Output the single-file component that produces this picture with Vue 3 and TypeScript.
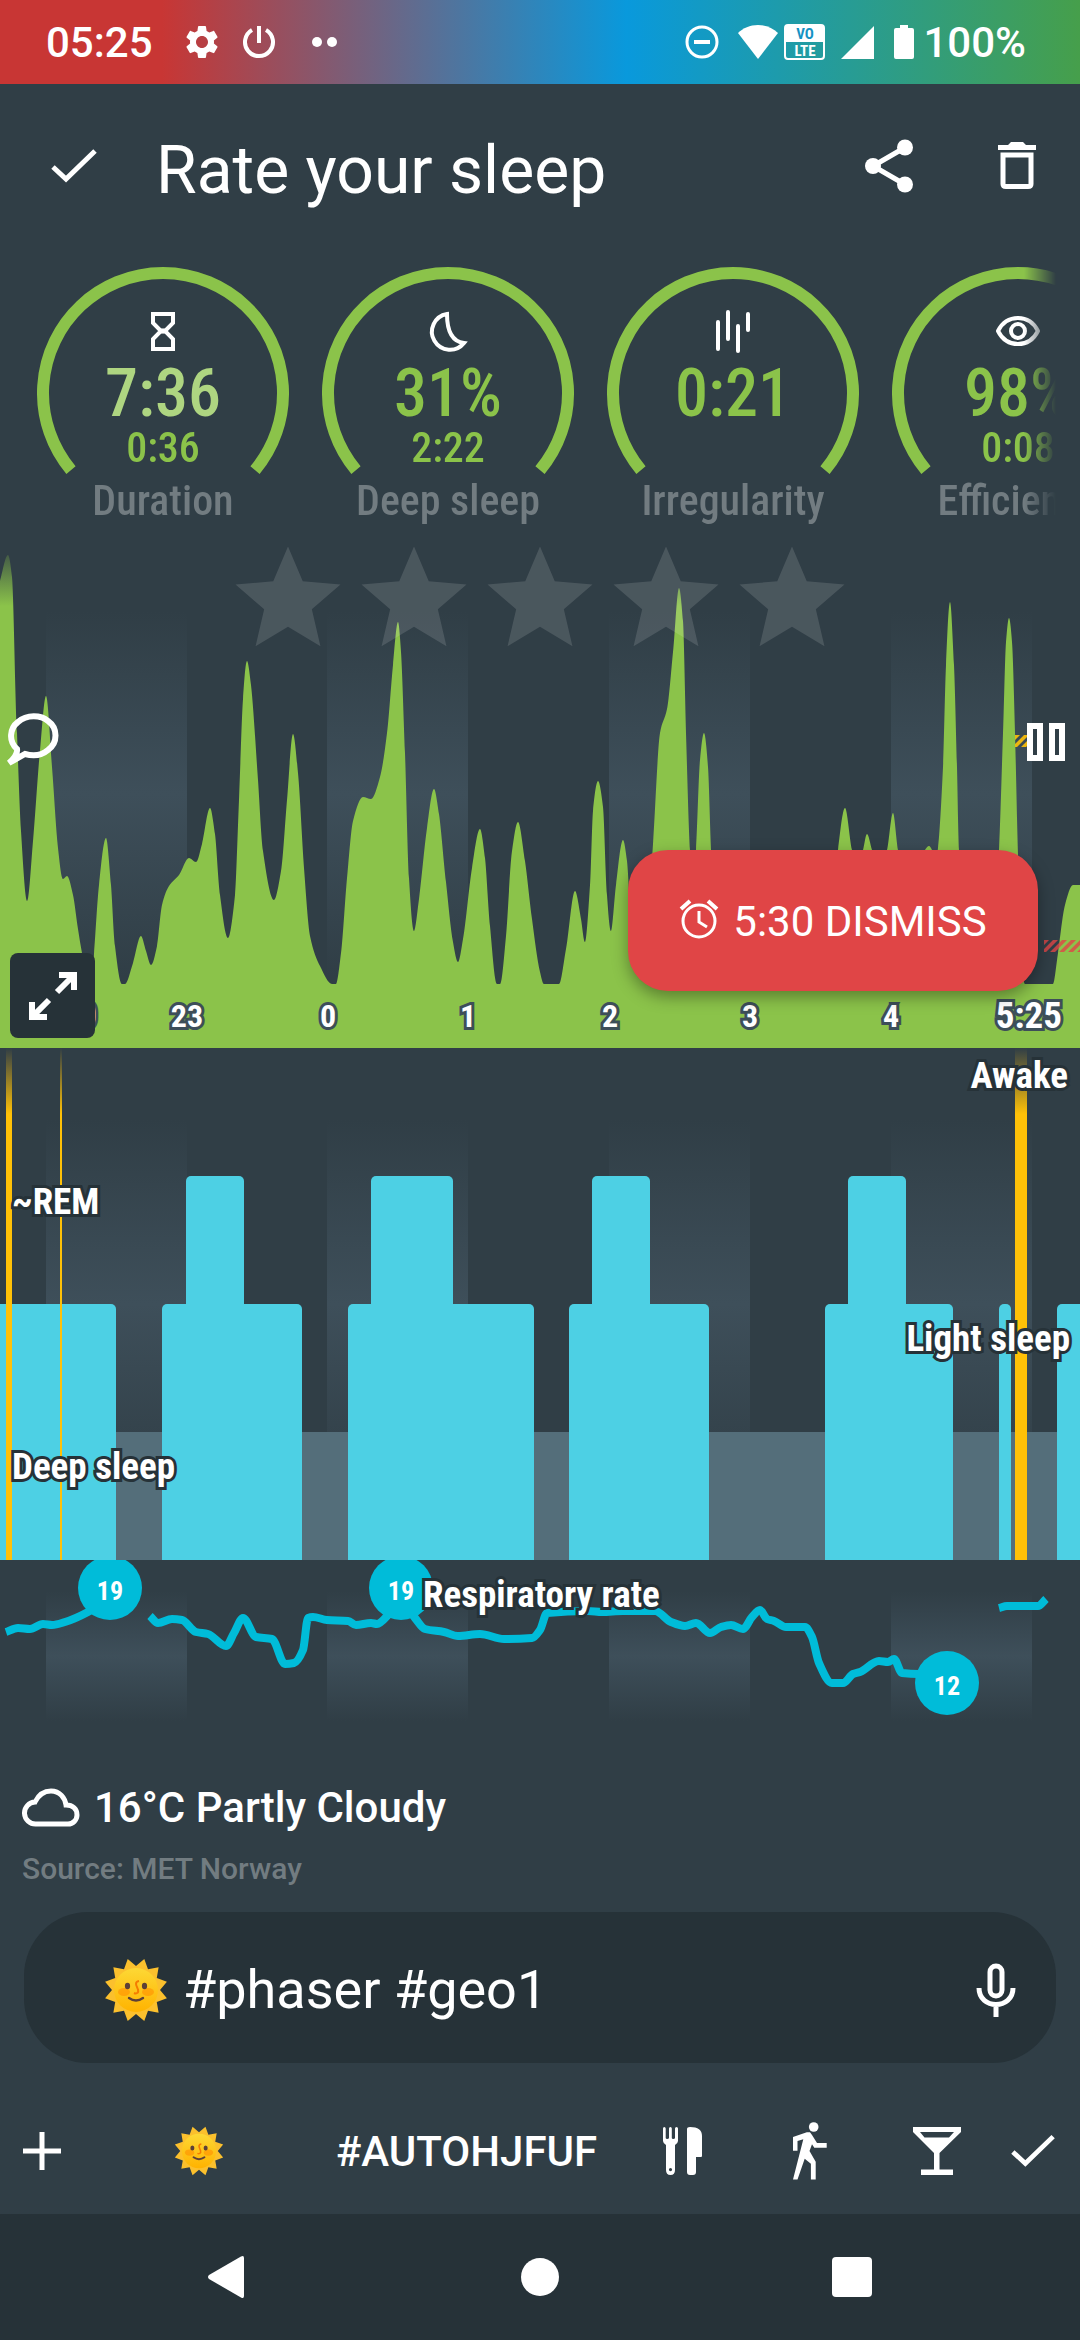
<script setup lang="ts">
import { ref } from 'vue'

type Point = [number, number]

interface Gauge {
  icon: 'hourglass' | 'moon' | 'bars' | 'eye'
  value: string
  detail: string
  label: string
  soft?: boolean
}

const gauges: Gauge[] = [
  { icon: 'hourglass', value: '7:36', detail: '0:36', label: 'Duration', soft: true },
  { icon: 'moon', value: '31%', detail: '2:22', label: 'Deep sleep' },
  { icon: 'bars', value: '0:21', detail: '', label: 'Irregularity' },
  { icon: 'eye', value: '98%', detail: '0:08', label: 'Efficiency' },
]

const rating = ref(0)
const comment = ref('#phaser #geo1')

const hourBands = [46, 327, 609, 891]

const hours = [
  { text: '23', x: 187 },
  { text: '0', x: 328 },
  { text: '1', x: 468 },
  { text: '2', x: 610 },
  { text: '3', x: 750 },
  { text: '4', x: 891 },
]

const activity: Point[] = [
  [0, 41], [8, 15], [12, 37], [17, 193], [21, 291], [27, 361], [33, 301], [40, 210], [46, 156],
  [52, 227], [58, 308], [63, 339], [67, 336], [73, 355], [78, 389], [82, 413], [88, 444], [91, 444],
  [94, 414], [99, 345], [106, 298], [111, 345], [115, 406], [122, 444], [125, 444], [133, 423],
  [141, 396], [146, 411], [151, 425], [157, 406], [162, 365], [169, 346], [179, 335], [189, 318],
  [196, 322], [202, 304], [210, 268], [215, 294], [220, 355], [228, 398], [235, 355], [239, 260],
  [243, 159], [247, 121], [251, 145], [258, 240], [263, 311], [274, 360], [281, 331], [287, 260],
  [293, 194], [298, 233], [304, 328], [310, 396], [320, 426], [332, 444], [336, 444], [341, 413],
  [347, 338], [353, 281], [363, 257], [371, 259], [380, 237], [387, 193], [393, 125], [398, 82],
  [401, 112], [405, 213], [409, 338], [414, 391], [419, 359], [427, 288], [434, 249], [439, 274],
  [446, 342], [453, 402], [458, 422], [463, 399], [472, 328], [480, 289], [485, 318], [490, 386],
  [497, 444], [500, 444], [506, 396], [512, 311], [518, 282], [525, 321], [532, 379], [540, 432],
  [544, 444], [559, 444], [566, 409], [575, 351], [581, 379], [585, 402], [590, 345], [593, 271],
  [598, 241], [603, 267], [607, 355], [611, 391], [616, 345], [623, 300], [627, 321], [632, 400],
  [638, 430], [646, 400], [653, 304], [660, 193], [667, 169], [673, 112], [679, 48], [683, 81],
  [686, 193], [690, 310], [693, 345], [696, 310], [700, 220], [704, 193], [708, 227], [711, 310],
  [716, 395], [724, 444], [820, 444], [833, 362], [838, 310], [845, 268], [852, 310], [857, 328],
  [863, 310], [867, 294], [872, 310], [879, 335], [887, 310], [893, 273], [898, 310], [911, 370],
  [925, 310], [929, 306], [932, 310], [935, 322], [938, 308], [943, 227], [946, 125], [950, 62],
  [954, 125], [957, 227], [959, 310], [967, 444], [991, 444], [999, 310], [1003, 193], [1006, 102],
  [1009, 78], [1012, 102], [1015, 193], [1018, 315], [1021, 410], [1025, 444], [1053, 444],
  [1058, 413], [1065, 365], [1073, 345], [1080, 345],
]

const breathing: Point[][] = [
  [[6, 72], [18, 68], [30, 69], [43, 64], [52, 65], [65, 62], [88, 52], [110, 37]],
  [
    [150, 56], [158, 63], [172, 59], [182, 60], [196, 72], [208, 74], [226, 86], [234, 73],
    [243, 58], [256, 77], [272, 79], [285, 104], [294, 103], [303, 90], [308, 58], [313, 57],
    [327, 60], [348, 61], [356, 65], [371, 63], [377, 64], [389, 54], [400, 40], [415, 58],
    [425, 69], [444, 72], [458, 76], [480, 74], [504, 79], [532, 78], [540, 70], [547, 53],
    [588, 51], [602, 52], [623, 51], [655, 51], [671, 62], [685, 66], [696, 63], [710, 73],
    [721, 67], [731, 65], [743, 69], [752, 57], [760, 50], [767, 59], [774, 61], [786, 67],
    [805, 67], [812, 77], [819, 103], [832, 123], [843, 123], [853, 114], [860, 112], [879, 101],
    [888, 102], [894, 99], [902, 113], [919, 114], [947, 114],
  ],
  [[999, 48], [1007, 46], [1038, 46], [1046, 39]],
]

const breathingMarks = [
  { x: 110, y: 28, text: '19' },
  { x: 401, y: 28, text: '19' },
  { x: 947, y: 123, text: '12' },
]

// x, width and top of every sleep phase block
const phases = [
  { x: -6, w: 122, y: 256 },
  { x: 162, w: 140, y: 256 },
  { x: 186, w: 58, y: 128 },
  { x: 348, w: 186, y: 256 },
  { x: 371, w: 82, y: 128 },
  { x: 569, w: 140, y: 256 },
  { x: 592, w: 58, y: 128 },
  { x: 825, w: 128, y: 256 },
  { x: 848, w: 58, y: 128 },
  { x: 999, w: 12, y: 256 },
  { x: 1057, w: 30, y: 256 },
]

const awake = [
  { x: 6, w: 6 },
  { x: 60, w: 2 },
  { x: 1015, w: 12 },
]

// Monotone cubic curve: smooth, without overshooting the samples
function curve(points: Point[]): string {
  const slopes = points.slice(1).map((p, i) => (p[1] - points[i][1]) / (p[0] - points[i][0]))
  const tangents = points.map((_, i) => {
    if (i === 0) return slopes[0]
    if (i === points.length - 1) return slopes[i - 1]
    const a = slopes[i - 1]
    const b = slopes[i]
    return a * b <= 0 ? 0 : (2 * a * b) / (a + b)
  })
  let d = `M${points[0][0]} ${points[0][1]}`
  for (let i = 1; i < points.length; i++) {
    const [x0, y0] = points[i - 1]
    const [x1, y1] = points[i]
    const h = (x1 - x0) / 3
    d += `C${x0 + h} ${y0 + tangents[i - 1] * h} ${x1 - h} ${y1 - tangents[i] * h} ${x1} ${y1}`
  }
  return d
}

const activityPath = `${curve(activity)}V508H0Z`
const breathingPaths = breathing.map(curve)

const sunRays = Array.from({ length: 24 }, (_, i) => {
  const angle = ((i * 15 + 15) * Math.PI) / 180
  const r = i % 2 === 0 ? 32 : 24
  return `${(32 + r * Math.sin(angle)).toFixed(2)},${(32 - r * Math.cos(angle)).toFixed(2)}`
}).join(' ')

const percent = (x: number) => `${(x / 1080) * 100}%`
</script>

<template>
  <div class="screen">
    <svg class="defs" width="0" height="0" aria-hidden="true">
      <defs>
        <linearGradient id="band" x1="0" y1="0" x2="0" y2="1">
          <stop offset="0.14" stop-color="#3e4f5a" stop-opacity="0" />
          <stop offset="0.5" stop-color="#3e4f5a" />
          <stop offset="0.86" stop-color="#3e4f5a" stop-opacity="0" />
        </linearGradient>
        <linearGradient id="fade" x1="0" y1="0" x2="0" y2="1">
          <stop offset="0" stop-color="#303e46" />
          <stop offset="1" stop-color="#303e46" stop-opacity="0" />
        </linearGradient>
        <linearGradient id="sunFill" x1="0" y1="0" x2="0" y2="1">
          <stop offset="0" stop-color="#fdd835" />
          <stop offset="1" stop-color="#ffb300" />
        </linearGradient>
        <pattern id="hatchYellow" width="9" height="12" patternUnits="userSpaceOnUse">
          <path d="M-12 12L0 0H5L-7 12ZM-3 12L9 0H14L2 12ZM6 12L18 0H23L11 12Z" fill="#ffc107" />
        </pattern>
        <pattern id="hatchRed" width="9" height="12" patternUnits="userSpaceOnUse">
          <path d="M-12 12L0 0H5L-7 12ZM-3 12L9 0H14L2 12ZM6 12L18 0H23L11 12Z" fill="#e04546" />
        </pattern>
        <symbol id="sun" viewBox="0 0 64 64">
          <polygon :points="sunRays" fill="#fbc02d" />
          <circle cx="32" cy="32" r="22" fill="url(#sunFill)" />
          <ellipse cx="20" cy="34" rx="6" ry="4" fill="#ff8f00" opacity="0.6" />
          <ellipse cx="44" cy="34" rx="6" ry="4" fill="#ff8f00" opacity="0.6" />
          <ellipse cx="23.500" cy="28" rx="2.600" ry="3.200" fill="#5d4037" />
          <ellipse cx="40.500" cy="28" rx="2.600" ry="3.200" fill="#5d4037" />
          <path d="M35 23C29 24 34 30 34 32C35 35 32 36 30 35" fill="none" stroke="#f57c00" stroke-width="2" />
          <path d="M25 40Q32 45 39 40" fill="none" stroke="#5d4037" stroke-width="2.400" stroke-linecap="round" />
        </symbol>
      </defs>
    </svg>

    <header class="status">
      <span class="clock">05:25</span>
      <svg class="s-gear" width="40" height="40" viewBox="0 0 24 24" fill="#fff">
        <path d="M19.140 12.940c.04-.3.06-.61.06-.94 0-.32-.02-.64-.07-.94l2.030-1.580c.18-.14.23-.41.12-.61l-1.920-3.320c-.12-.22-.37-.29-.59-.22l-2.390.96c-.5-.38-1.030-.7-1.620-.94l-.36-2.540c-.04-.24-.24-.41-.48-.41h-3.840c-.24 0-.43.17-.47.41l-.36 2.540c-.59.24-1.130.57-1.620.94l-2.390-.96c-.22-.08-.47 0-.59.22L2.740 8.870c-.12.21-.08.47.12.61l2.030 1.580c-.05.3-.09.63-.09.94s.02.64.07.94l-2.030 1.580c-.18.14-.23.41-.12.61l1.920 3.320c.12.22.37.29.59.22l2.390-.96c.5.38 1.030.7 1.620.94l.36 2.540c.05.24.24.41.48.41h3.840c.24 0 .44-.17.47-.41l.36-2.540c.59-.24 1.130-.56 1.620-.94l2.390.96c.22.08.47 0 .59-.22l1.920-3.320c.12-.22.07-.47-.12-.61l-2.010-1.580zM12 15.600c-1.980 0-3.600-1.620-3.600-3.600s1.620-3.600 3.600-3.600 3.600 1.620 3.600 3.600-1.620 3.600-3.600 3.600z" />
      </svg>
      <svg class="s-power" width="34" height="34" viewBox="0 0 34 34" fill="none" stroke="#fff" stroke-width="4">
        <path d="M17 1V18M10 5A14 14 0 1 0 24 5" />
      </svg>
      <svg class="s-dots" width="28" height="12" viewBox="0 0 28 12" fill="#fff">
        <circle cx="6" cy="6" r="5" />
        <circle cx="21" cy="6" r="5" />
      </svg>
      <div class="status-right">
        <svg width="34" height="34" viewBox="0 0 34 34" fill="none" stroke="#fff" stroke-width="3">
          <circle cx="17" cy="17" r="15" />
          <path d="M9 17H25" stroke-width="4" />
        </svg>
        <svg class="s-wifi" width="40" height="34" viewBox="0 0 40 34" fill="#fff">
          <path d="M20 0C12 0 5 3 0 8L20 34L40 8C35 3 28 0 20 0Z" />
        </svg>
        <svg class="s-volte" width="41" height="36" viewBox="0 0 41 36">
          <rect x="1" y="1" width="39" height="34" rx="3" fill="none" stroke="#fff" stroke-width="2" />
          <path d="M1 3Q1 1 3 1H38Q40 1 40 3V18H1Z" fill="#fff" />
          <text x="21" y="15" class="volte-top">VO</text>
          <text x="21" y="32" class="volte-bottom">LTE</text>
        </svg>
        <svg class="s-signal" width="33" height="33" viewBox="0 0 33 33" fill="#fff">
          <path d="M33 0V33H0Z" />
        </svg>
        <svg class="s-battery" width="20" height="34" viewBox="0 0 20 34" fill="#fff">
          <path d="M6 0H14V3H18Q20 3 20 5V32Q20 34 18 34H2Q0 34 0 32V5Q0 3 2 3H6Z" />
        </svg>
        <span class="charge">100%</span>
      </div>
    </header>

    <div class="appbar">
      <button type="button" class="icon-button confirm" aria-label="Done">
        <svg width="48" height="36" viewBox="0 0 48 36" fill="none" stroke="#fff" stroke-width="5">
          <path d="M3 19L16 31L45 3" />
        </svg>
      </button>
      <h1>Rate your sleep</h1>
      <button type="button" class="icon-button share" aria-label="Share">
        <svg width="50" height="54" viewBox="0 0 50 54" fill="#fff">
          <circle cx="41" cy="8.500" r="8" />
          <circle cx="9" cy="27" r="8" />
          <circle cx="41" cy="45.500" r="8" />
          <path d="M41 8.500L9 27L41 45.500" fill="none" stroke="#fff" stroke-width="5" />
        </svg>
      </button>
      <button type="button" class="icon-button trash" aria-label="Delete">
        <svg width="38" height="48" viewBox="0 0 38 48" fill="#fff">
          <path d="M0 3H10L13 0H25L28 3H38V8H0Z" />
          <path d="M5 13H33V42Q33 44.500 30 44.500H8Q5 44.500 5 42Z" fill="none" stroke="#fff" stroke-width="5" />
        </svg>
      </button>
    </div>

    <section class="gauges">
      <article v-for="g in gauges" :key="g.label" class="gauge">
        <svg class="arc" width="252" height="252" viewBox="0 0 252 252" fill="none">
          <path d="M34 203.100A120 120 0 1 1 218 203.100" stroke="#8bc34a" stroke-width="12" />
        </svg>
        <svg v-if="g.icon === 'hourglass'" class="g-icon" width="48" height="48" viewBox="0 0 48 48" fill="none" stroke="#fff" stroke-width="4">
          <path d="M14 7H34V16L26 24L34 32V42H14V32L22 24L14 16Z" />
          <path d="M22 22L26 26M26 22L22 26" stroke-width="3" />
        </svg>
        <svg v-else-if="g.icon === 'moon'" class="g-icon" width="48" height="48" viewBox="0 0 48 48" fill="none" stroke="#fff" stroke-width="4">
          <path d="M23 7A18 18 0 1 0 40 36Q23 34 23 7Z" stroke-linejoin="miter" />
        </svg>
        <svg v-else-if="g.icon === 'bars'" class="g-icon" width="48" height="48" viewBox="0 0 48 48" fill="none" stroke="#fff" stroke-width="4" stroke-linecap="round">
          <path d="M9 15V42M19 5V32M29 19V44M39 7V23" />
        </svg>
        <svg v-else class="g-icon" width="48" height="48" viewBox="0 0 48 48" fill="none" stroke="#fff" stroke-width="4">
          <path d="M4 24C9 14 16 11 24 11S39 14 44 24C39 34 32 37 24 37S9 34 4 24Z" stroke-linejoin="round" />
          <circle cx="24" cy="24" r="7" />
        </svg>
        <strong class="value" :class="{ soft: g.soft }">{{ g.value }}</strong>
        <span class="detail">{{ g.detail }}</span>
        <span class="label">{{ g.label }}</span>
      </article>
    </section>

    <section class="activity">
      <svg class="plot" viewBox="0 0 1080 508" preserveAspectRatio="none" aria-hidden="true">
        <rect v-for="x in hourBands" :key="x" :x="x" y="0" width="141" height="508" fill="url(#band)" />
        <path :d="activityPath" fill="#8bc34a" />
        <rect x="0" y="0" width="1080" height="66" fill="url(#fade)" />
        <g transform="translate(1015 195)">
          <rect width="12" height="12" fill="url(#hatchYellow)" opacity="0.9" />
        </g>
        <g transform="translate(1044 400)">
          <rect width="36" height="12" fill="url(#hatchRed)" opacity="0.8" />
        </g>
      </svg>

      <div class="stars" role="group" aria-label="Rating">
        <button v-for="n in 5" :key="n" type="button" :class="{ on: n <= rating }" :aria-label="`${n} of 5`" @click="rating = n">
          <svg width="126" height="126" viewBox="0 0 24 24">
            <path d="M12 17.270L18.180 21l-1.640-7.030L22 9.240l-7.190-.61L12 2 9.190 8.630 2 9.240l5.460 4.730L5.820 21z" />
          </svg>
        </button>
      </div>

      <svg class="bubble" width="54" height="54" viewBox="0 0 54 54" fill="none" stroke="#fff" stroke-width="6" aria-hidden="true">
        <path d="M12 36C3 28 5 15 13 9C22 1 36 2 43 8C53 15 53 30 43 37C36 43 27 43 20 41L4 50Q13 42 12 36Z" />
      </svg>
      <svg class="pause" width="38" height="38" viewBox="0 0 38 38" fill="none" stroke="#fff" stroke-width="6" aria-hidden="true">
        <path d="M3 3H13V35H3ZM25 3H35V35H25Z" />
      </svg>

      <span class="edge-time start">21:50</span>
      <span v-for="h in hours" :key="h.text" class="hour" :style="{ left: percent(h.x) }">{{ h.text }}</span>
      <span class="edge-time end">5:25</span>

      <button type="button" class="expand" aria-label="Expand chart">
        <svg width="48" height="48" viewBox="0 0 48 48" fill="none" stroke="#fff" stroke-width="6">
          <path d="M30 3H45V18M44 4L28 20M18 45H3V30M4 44L20 28" />
        </svg>
      </button>

      <button type="button" class="dismiss">
        <svg width="40" height="40" viewBox="0 0 40 40" fill="none" stroke="#fff" stroke-width="3" aria-hidden="true">
          <circle cx="20" cy="22" r="16" />
          <path d="M20 12V23L28 28" />
          <path d="M2 10L11 2M29 2L38 10" stroke-width="4" />
        </svg>
        <span>5:30 DISMISS</span>
      </button>
    </section>

    <section class="phases">
      <svg class="plot" viewBox="0 0 1080 512" preserveAspectRatio="none" aria-hidden="true">
        <rect v-for="x in hourBands" :key="x" :x="x" y="0" width="141" height="512" fill="url(#band)" />
        <rect x="0" y="384" width="1080" height="128" fill="#546e7a" />
        <rect v-for="p in phases" :key="p.x" :x="p.x" :y="p.y" :width="p.w" :height="520 - p.y" rx="5" fill="#4dd0e4" />
        <rect v-for="a in awake" :key="a.x" :x="a.x" y="0" :width="a.w" height="512" fill="#ffc107" />
        <rect x="0" y="0" width="1080" height="66" fill="url(#fade)" />
      </svg>
      <span class="tag awake">Awake</span>
      <span class="tag rem">~REM</span>
      <span class="tag light">Light sleep</span>
      <span class="tag deep">Deep sleep</span>
    </section>

    <section class="breathing">
      <svg class="plot" viewBox="0 0 1080 196" preserveAspectRatio="none">
        <rect v-for="x in hourBands" :key="x" :x="x" y="6" width="141" height="180" fill="url(#band)" />
        <path v-for="d in breathingPaths" :key="d" :d="d" fill="none" stroke="#00bcd9" stroke-width="8" />
        <g v-for="m in breathingMarks" :key="m.x">
          <circle :cx="m.x" :cy="m.y" r="32" fill="#00bcd9" />
          <text :x="m.x" :y="m.y + 12" class="mark">{{ m.text }}</text>
        </g>
      </svg>
      <span class="tag rate">Respiratory rate</span>
    </section>

    <section class="weather">
      <p class="now">
        <svg width="58" height="40" viewBox="0 0 58 40" fill="none" stroke="#fff" stroke-width="5" aria-hidden="true">
          <path d="M14 36A11 11 0 0 1 13 14C18 4 25 3 29 3C38 3 43 10 44 17C51 17 55 21 55 27C55 32 51 36 46 36Z" />
        </svg>
        <span>16°C Partly Cloudy</span>
      </p>
      <p class="source">Source: MET Norway</p>
    </section>

    <div class="comment">
      <svg width="64" height="64" aria-hidden="true"><use href="#sun" /></svg>
      <input v-model="comment" type="text" aria-label="Comment" />
      <button type="button" class="icon-button" aria-label="Voice input">
        <svg width="40" height="54" viewBox="0 0 40 54" fill="none" stroke="#fff" stroke-width="5">
          <rect x="14" y="3" width="12" height="30" rx="6" stroke-width="5" />
          <path d="M3 25C3 47 37 47 37 25M20 42V54" />
        </svg>
      </button>
    </div>

    <div class="tags">
      <button type="button" class="add" aria-label="Add tag">
        <svg width="38" height="38" viewBox="0 0 38 38" fill="none" stroke="#fff" stroke-width="5">
          <path d="M19 0V38M0 19H38" />
        </svg>
      </button>
      <button type="button" class="sun-chip" aria-label="Sun">
        <svg width="50" height="50"><use href="#sun" /></svg>
      </button>
      <button type="button" class="text-chip">#AUTOHJFUF</button>
      <button type="button" class="chip" aria-label="Food">
        <svg width="40" height="48" viewBox="0 0 40 48" fill="#fff">
          <path fill-rule="evenodd" d="M0 1.500Q0 0 1.300 0T2.700 1.500V11Q2.700 12 4.200 12T6 11V1.500Q6 0 7.400 0T8.800 1.500V11Q8.800 12 10.300 12T12 11V1.500Q12 0 13.500 0T15 1.500V14Q15 16 12 18V43Q12 48 7.500 48T3 43V18Q0 16 0 14ZM7.500 41A1.600 1.600 0 1 0 7.500 44.200A1.600 1.600 0 1 0 7.500 41Z" />
          <path d="M24 2Q24 0 27 0Q39 0 39 9V29Q39 30 38 30H33V45Q33 48 30 48H27Q24 48 24 45Z" />
        </svg>
      </button>
      <button type="button" class="chip" aria-label="Sport">
        <svg width="34" height="58" viewBox="0 0 34 58" fill="#fff">
          <circle cx="20.700" cy="5" r="4.800" />
          <path d="M0 15L13.800 10.300H17L19 13L24 21H33.700V25.700H21.300L19 22.300L16.500 29L22.700 39.700V57.500H17.900V41.700L11.700 36.700L4.500 57.500H0L10.300 17.300L4.500 19V28.700H0Z" />
        </svg>
      </button>
      <button type="button" class="chip" aria-label="Alcohol">
        <svg width="48" height="48" viewBox="0 0 48 48" fill="#fff">
          <path fill-rule="evenodd" d="M0 0H48V5L26.500 26V42.500H40V48H8V42.500H21V26L0 5ZM7 5L11.500 10.500H36L41 5Z" />
        </svg>
      </button>
      <button type="button" class="save" aria-label="Save">
        <svg width="46" height="36" viewBox="0 0 48 36" fill="none" stroke="#fff" stroke-width="5">
          <path d="M3 19L16 31L45 3" />
        </svg>
      </button>
    </div>

    <nav class="system">
      <button type="button" aria-label="Back">
        <svg width="42" height="42" viewBox="0 0 42 42" fill="#fff">
          <path d="M2 19Q0 21 2 23L34 41.500Q37 43 37 40V2Q37 -1 34 .5Z" />
        </svg>
      </button>
      <button type="button" aria-label="Home">
        <svg width="42" height="42" viewBox="0 0 42 42" fill="#fff"><circle cx="21" cy="21" r="19" /></svg>
      </button>
      <button type="button" aria-label="Recent apps">
        <svg width="42" height="42" viewBox="0 0 42 42" fill="#fff"><rect x="1" y="1" width="40" height="40" rx="4" /></svg>
      </button>
    </nav>
  </div>
</template>

<style>
body {
  background: #303e46;
}
</style>

<style scoped>
.screen {
  --condensed: "Roboto Condensed", "Liberation Sans Narrow", Roboto, sans-serif;
  display: flex;
  flex-direction: column;
  min-height: 100vh;
  overflow: hidden;
  background: #303e46;
  color: #fff;
  font-family: Roboto, sans-serif;
}

.defs {
  position: absolute;
}

button {
  margin: 0;
  padding: 0;
  border: 0;
  background: none;
  color: inherit;
  font: inherit;
}

svg {
  display: block;
  flex: none;
}

.status {
  display: flex;
  align-items: center;
  height: 84px;
  padding: 0 54px 0 46px;
  background: linear-gradient(to right, #c83634 0, #c83634 15%, #0999dc 58%, #469f4b 100%);
  font-size: 42px;
  font-weight: 500;
}

.clock {
  width: 108px;
}

.s-gear {
  margin-left: 28px;
}

.s-power {
  margin-left: 20px;
}

.s-dots {
  margin-left: 35px;
}

.status-right {
  display: flex;
  align-items: center;
  margin-left: auto;
}

.s-wifi {
  margin-left: 19px;
}

.s-volte {
  margin-left: 6px;
}

.s-signal {
  margin-left: 16px;
}

.s-battery {
  margin-left: 20px;
}

.charge {
  margin-left: 9px;
}

.volte-top,
.volte-bottom {
  font-family: var(--condensed);
  font-size: 15px;
  font-weight: 700;
  text-anchor: middle;
}

.volte-top {
  fill: #1592c4;
}

.volte-bottom {
  fill: #fff;
}

.appbar {
  display: flex;
  align-items: center;
  height: 164px;
  padding: 0 44px 0 50px;
}

h1 {
  flex: 1;
  margin: 10px 0 0 58px;
  font-size: 66px;
  font-weight: 400;
  line-height: 80px;
}

.trash {
  margin-left: 84px;
}

.gauges {
  display: flex;
  gap: 33px;
  height: 292px;
  margin: 0 24px;
  padding: 19px 0 0 13px;
  box-sizing: border-box;
  overflow: hidden;
  mask-image: linear-gradient(to right, #000 calc(100% - 32px), transparent);
}

.gauge {
  position: relative;
  display: flex;
  flex: none;
  flex-direction: column;
  align-items: center;
  width: 252px;
  padding-top: 40px;
  box-sizing: border-box;
  font-family: var(--condensed);
  color: #8bc34a;
}

.arc {
  position: absolute;
  top: 0;
  left: 0;
}

.value {
  font-size: 66px;
  font-weight: 500;
  line-height: 78px;
}

.value.soft {
  color: #aed581;
}

.detail {
  height: 30px;
  font-size: 42px;
  font-weight: 500;
  line-height: 30px;
}

.label {
  color: #727c81;
  font-size: 42px;
  font-weight: 500;
  line-height: 76px;
  white-space: nowrap;
}

.activity,
.phases,
.breathing {
  position: relative;
  overflow: hidden;
}

.activity {
  height: 508px;
}

.phases {
  height: 512px;
}

.breathing {
  height: 196px;
}

.plot {
  width: 100%;
  height: 100%;
}

.stars {
  position: absolute;
  top: -4px;
  left: 0;
  right: 0;
  display: flex;
  justify-content: center;
}

.stars path {
  fill: #fff;
  opacity: 0.13;
}

.stars .on path {
  opacity: 0.9;
}

.bubble {
  position: absolute;
  top: 173px;
  left: 5px;
}

.pause {
  position: absolute;
  top: 183px;
  right: 15px;
}

.hour,
.edge-time,
.tag {
  position: absolute;
  font-family: var(--condensed);
  font-weight: 700;
  line-height: 44px;
  white-space: nowrap;
  paint-order: stroke fill;
  -webkit-text-stroke: 6px #263238;
}

.hour,
.edge-time {
  bottom: 10px;
  -webkit-text-stroke-color: #3d4e59;
}

.hour {
  font-size: 32px;
  transform: translateX(-50%);
}

.edge-time {
  font-size: 37px;
}

.edge-time.start {
  left: 12px;
}

.edge-time.end {
  right: 18px;
}

.expand {
  position: absolute;
  bottom: 10px;
  left: 10px;
  display: flex;
  align-items: center;
  justify-content: center;
  width: 85px;
  height: 85px;
  border-radius: 8px;
  background: #263238;
}

.dismiss {
  position: absolute;
  right: 42px;
  bottom: 57px;
  display: flex;
  align-items: center;
  justify-content: center;
  gap: 14px;
  width: 410px;
  height: 141px;
  padding-top: 2px;
  border-radius: 40px;
  background: #e04546;
  box-shadow: 0 6px 16px rgba(0, 0, 0, 0.35);
  font-size: 42px;
}

.dismiss svg {
  margin-bottom: 6px;
}

.tag {
  font-size: 37px;
}

.awake {
  top: 6px;
  right: 12px;
}

.rem {
  top: 132px;
  left: 12px;
}

.light {
  top: 269px;
  right: 10px;
}

.deep {
  top: 397px;
  left: 12px;
}

.rate {
  top: 13px;
  left: 423px;
}

.mark {
  fill: #fff;
  font-family: var(--condensed);
  font-size: 26px;
  font-weight: 700;
  text-anchor: middle;
}

.weather {
  padding: 26px 22px 0;
}

.weather p {
  margin: 0;
}

.now {
  display: flex;
  align-items: center;
  gap: 14px;
  font-size: 42px;
  font-weight: 500;
  line-height: 52px;
}

.source {
  padding: 14px 0 22px;
  color: #727c81;
  font-size: 30px;
  font-weight: 500;
  line-height: 42px;
}

.comment {
  display: flex;
  align-items: center;
  height: 151px;
  margin: 0 24px;
  padding: 4px 40px 0 80px;
  box-sizing: border-box;
  border-radius: 64px;
  background: #263238;
}

.comment input {
  flex: 1;
  min-width: 0;
  margin: 0 24px 0 15px;
  padding: 0;
  border: 0;
  outline: 0;
  background: none;
  color: #fff;
  font-family: Roboto, sans-serif;
  font-size: 54px;
}

.tags {
  display: flex;
  align-items: center;
  height: 126px;
  margin-top: 25px;
}

.tags button {
  display: flex;
  flex: none;
  align-items: center;
  justify-content: center;
  height: 100%;
}

.add {
  width: 83px;
}

.sun-chip {
  width: 231px;
}

.tags .text-chip {
  padding: 0 22px;
  font-size: 42px;
  font-weight: 500;
}

.chip {
  width: 127px;
}

.tags .save {
  margin-left: auto;
  padding-right: 24px;
}

.system {
  display: flex;
  flex: 1;
  align-items: center;
  justify-content: center;
  gap: 270px;
  min-height: 126px;
  background: #263238;
}
</style>
